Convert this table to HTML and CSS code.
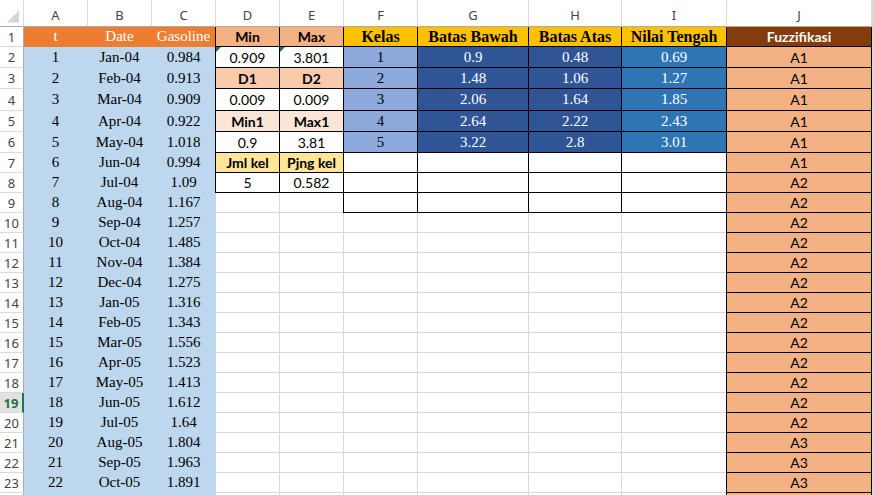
FILE: index.html
```
<!DOCTYPE html>
<html>
<head>
<meta charset="utf-8">
<link rel="stylesheet" href="styles.css">
</head>
<body>
<div class="sheet">
  <div class="ch corner"><svg width="24" height="26" viewBox="0 0 24 26"><polygon points="20,10 20,23 7,23" fill="#d6d6d6"/></svg></div>
  <div class="ch">A</div><div class="ch">B</div><div class="ch">C</div><div class="ch">D</div><div class="ch">E</div><div class="ch">F</div><div class="ch">G</div><div class="ch">H</div><div class="ch">I</div><div class="ch">J</div><div class="ch"></div>

  <div class="rh">1</div>
  <div class="c or">t</div><div class="c or">Date</div><div class="c or">Gasoline</div>
  <div class="c k s1 bx bl">Min</div><div class="c k s1 bx">Max</div>
  <div class="c h gold bx bl">Kelas</div><div class="c h gold bx">Batas Bawah</div><div class="c h gold bx">Batas Atas</div><div class="c h gold bx">Nilai Tengah</div>
  <div class="c k w brn bx bl">Fuzzifikasi</div><div class="c"></div>

  <div class="rh">2</div>
  <div class="c lb">1</div><div class="c lb">Jan-04</div><div class="c lb">0.984</div>
  <div class="c n bx bl tri">0.909</div><div class="c n bx tri">3.801</div>
  <div class="c fb bx bl">1</div><div class="c w db bx">0.9</div><div class="c w db bx">0.48</div><div class="c w mb bx">0.69</div>
  <div class="c n sa bx bl">A1</div><div class="c"></div>

  <div class="rh">3</div>
  <div class="c lb">2</div><div class="c lb">Feb-04</div><div class="c lb">0.913</div>
  <div class="c k s2 bx bl">D1</div><div class="c k s2 bx">D2</div>
  <div class="c fb bx bl">2</div><div class="c w db bx">1.48</div><div class="c w db bx">1.06</div><div class="c w mb bx">1.27</div>
  <div class="c n sa bx bl">A1</div><div class="c"></div>

  <div class="rh">4</div>
  <div class="c lb">3</div><div class="c lb">Mar-04</div><div class="c lb">0.909</div>
  <div class="c n bx bl">0.009</div><div class="c n bx">0.009</div>
  <div class="c fb bx bl">3</div><div class="c w db bx">2.06</div><div class="c w db bx">1.64</div><div class="c w mb bx">1.85</div>
  <div class="c n sa bx bl">A1</div><div class="c"></div>

  <div class="rh">5</div>
  <div class="c lb">4</div><div class="c lb">Apr-04</div><div class="c lb">0.922</div>
  <div class="c k s3 bx bl">Min1</div><div class="c k s3 bx">Max1</div>
  <div class="c fb bx bl">4</div><div class="c w db bx">2.64</div><div class="c w db bx">2.22</div><div class="c w mb bx">2.43</div>
  <div class="c n sa bx bl">A1</div><div class="c"></div>

  <div class="rh">6</div>
  <div class="c lb">5</div><div class="c lb">May-04</div><div class="c lb">1.018</div>
  <div class="c n bx bl">0.9</div><div class="c n bx">3.81</div>
  <div class="c fb bx bl">5</div><div class="c w db bx">3.22</div><div class="c w db bx">2.8</div><div class="c w mb bx">3.01</div>
  <div class="c n sa bx bl">A1</div><div class="c"></div>

  <div class="rh">7</div>
  <div class="c lb">6</div><div class="c lb">Jun-04</div><div class="c lb">0.994</div>
  <div class="c k gd bx bl">Jml kel</div><div class="c k gd bx">Pjng kel</div>
  <div class="c bx bl"></div><div class="c bx"></div><div class="c bx"></div><div class="c bx"></div>
  <div class="c n sa bx bl">A1</div><div class="c"></div>

  <div class="rh">8</div>
  <div class="c lb">7</div><div class="c lb">Jul-04</div><div class="c lb">1.09</div>
  <div class="c n bx bl">5</div><div class="c n bx">0.582</div>
  <div class="c bx bl"></div><div class="c bx"></div><div class="c bx"></div><div class="c bx"></div>
  <div class="c n sa bx bl">A2</div><div class="c"></div>

  <div class="rh">9</div>
  <div class="c lb">8</div><div class="c lb">Aug-04</div><div class="c lb">1.167</div>
  <div class="c"></div><div class="c"></div>
  <div class="c bx bl"></div><div class="c bx"></div><div class="c bx"></div><div class="c bx"></div>
  <div class="c n sa bx bl">A2</div><div class="c"></div>

  <div class="rh">10</div>
  <div class="c lb">9</div><div class="c lb">Sep-04</div><div class="c lb">1.257</div>
  <div class="c"></div><div class="c"></div><div class="c"></div><div class="c"></div><div class="c"></div><div class="c"></div>
  <div class="c n sa bx bl">A2</div><div class="c"></div>

  <div class="rh">11</div>
  <div class="c lb">10</div><div class="c lb">Oct-04</div><div class="c lb">1.485</div>
  <div class="c"></div><div class="c"></div><div class="c"></div><div class="c"></div><div class="c"></div><div class="c"></div>
  <div class="c n sa bx bl">A2</div><div class="c"></div>

  <div class="rh">12</div>
  <div class="c lb">11</div><div class="c lb">Nov-04</div><div class="c lb">1.384</div>
  <div class="c"></div><div class="c"></div><div class="c"></div><div class="c"></div><div class="c"></div><div class="c"></div>
  <div class="c n sa bx bl">A2</div><div class="c"></div>

  <div class="rh">13</div>
  <div class="c lb">12</div><div class="c lb">Dec-04</div><div class="c lb">1.275</div>
  <div class="c"></div><div class="c"></div><div class="c"></div><div class="c"></div><div class="c"></div><div class="c"></div>
  <div class="c n sa bx bl">A2</div><div class="c"></div>

  <div class="rh">14</div>
  <div class="c lb">13</div><div class="c lb">Jan-05</div><div class="c lb">1.316</div>
  <div class="c"></div><div class="c"></div><div class="c"></div><div class="c"></div><div class="c"></div><div class="c"></div>
  <div class="c n sa bx bl">A2</div><div class="c"></div>

  <div class="rh">15</div>
  <div class="c lb">14</div><div class="c lb">Feb-05</div><div class="c lb">1.343</div>
  <div class="c"></div><div class="c"></div><div class="c"></div><div class="c"></div><div class="c"></div><div class="c"></div>
  <div class="c n sa bx bl">A2</div><div class="c"></div>

  <div class="rh">16</div>
  <div class="c lb">15</div><div class="c lb">Mar-05</div><div class="c lb">1.556</div>
  <div class="c"></div><div class="c"></div><div class="c"></div><div class="c"></div><div class="c"></div><div class="c"></div>
  <div class="c n sa bx bl">A2</div><div class="c"></div>

  <div class="rh">17</div>
  <div class="c lb">16</div><div class="c lb">Apr-05</div><div class="c lb">1.523</div>
  <div class="c"></div><div class="c"></div><div class="c"></div><div class="c"></div><div class="c"></div><div class="c"></div>
  <div class="c n sa bx bl">A2</div><div class="c"></div>

  <div class="rh">18</div>
  <div class="c lb">17</div><div class="c lb">May-05</div><div class="c lb">1.413</div>
  <div class="c"></div><div class="c"></div><div class="c"></div><div class="c"></div><div class="c"></div><div class="c"></div>
  <div class="c n sa bx bl">A2</div><div class="c"></div>

  <div class="rh act">19</div>
  <div class="c lb">18</div><div class="c lb">Jun-05</div><div class="c lb">1.612</div>
  <div class="c"></div><div class="c"></div><div class="c"></div><div class="c"></div><div class="c"></div><div class="c"></div>
  <div class="c n sa bx bl">A2</div><div class="c"></div>

  <div class="rh">20</div>
  <div class="c lb">19</div><div class="c lb">Jul-05</div><div class="c lb">1.64</div>
  <div class="c"></div><div class="c"></div><div class="c"></div><div class="c"></div><div class="c"></div><div class="c"></div>
  <div class="c n sa bx bl">A2</div><div class="c"></div>

  <div class="rh">21</div>
  <div class="c lb">20</div><div class="c lb">Aug-05</div><div class="c lb">1.804</div>
  <div class="c"></div><div class="c"></div><div class="c"></div><div class="c"></div><div class="c"></div><div class="c"></div>
  <div class="c n sa bx bl">A3</div><div class="c"></div>

  <div class="rh">22</div>
  <div class="c lb">21</div><div class="c lb">Sep-05</div><div class="c lb">1.963</div>
  <div class="c"></div><div class="c"></div><div class="c"></div><div class="c"></div><div class="c"></div><div class="c"></div>
  <div class="c n sa bx bl">A3</div><div class="c"></div>

  <div class="rh">23</div>
  <div class="c lb">22</div><div class="c lb">Oct-05</div><div class="c lb">1.891</div>
  <div class="c"></div><div class="c"></div><div class="c"></div><div class="c"></div><div class="c"></div><div class="c"></div>
  <div class="c n sa bx bl">A3</div><div class="c"></div>

  <div class="rh"></div>
  <div class="c lb"></div><div class="c lb"></div><div class="c lb"></div>
  <div class="c"></div><div class="c"></div><div class="c"></div><div class="c"></div><div class="c"></div><div class="c"></div>
  <div class="c n sa bx bl"></div><div class="c"></div>
</div>
</body>
</html>
```
FILE: styles.css
```
* { box-sizing: border-box; margin: 0; padding: 0; }
html, body { width: 873px; height: 495px; overflow: hidden; background: #fff; }

.sheet {
  display: grid;
  grid-template-columns: 24px 64px 64px 64px 64px 64px 74px 111px 93px 105px 145px 1fr;
  grid-template-rows: 27px 20px 21px 21px 22px 21px 21px repeat(18, 20px);
}

.ch {
  display: flex;
  align-items: center;
  justify-content: center;
  padding-top: 3px;
  font: 13px "Noto Sans", "DejaVu Sans", sans-serif;
  color: #444;
  background: #fff;
  border-right: 1px solid #dadada;
  border-bottom: 1px solid #ababab;
}
.corner { padding: 0; align-items: flex-start; justify-content: flex-start; }
.corner svg { display: block; }

.rh {
  display: flex;
  align-items: center;
  justify-content: center;
  font: 13px "Noto Sans", "DejaVu Sans", sans-serif;
  color: #444;
  background: #fff;
  border-right: 1px solid #ababab;
  border-bottom: 1px solid #dadada;
}
.rh.act {
  background: #e1e1e1;
  color: #217346;
  font-weight: bold;
  border-right: 2px solid #217346;
}

.c {
  position: relative;
  display: flex;
  align-items: center;
  justify-content: center;
  white-space: nowrap;
  overflow: visible;
  font: 15px "Liberation Serif", "Times New Roman", serif;
  color: #000;
  border-right: 1px solid #d9d9d9;
  border-bottom: 1px solid #d9d9d9;
}

/* text styles */
.k { font: bold 14px Lato, "Liberation Sans", sans-serif; }
.n { font: 14px Lato, "Liberation Sans", sans-serif; }
.h { font: bold 16px "Liberation Serif", "Times New Roman", serif; }
.w { color: #fff; }

/* fills (filled cells hide gridlines) */
.or { background: #ed7d31; border-color: #ed7d31; color: #fff; }
.lb { background: #bdd7ee; border-color: #bdd7ee; }
.s1 { background: #f4b183; }
.s2 { background: #f8cbad; }
.s3 { background: #fbe5d6; }
.gd { background: #ffe699; }
.gold { background: #ffc000; }
.fb { background: #8ea9db; }
.db { background: #2f5597; }
.mb { background: #2e75b6; }
.brn { background: #843c0c; }
.sa { background: #f4b183; }

/* black cell borders */
.bx { border-right-color: #000; border-bottom-color: #000; }
.bl { box-shadow: -1px 0 0 #000; }

/* error indicator */
.tri::before {
  content: "";
  position: absolute;
  left: 0;
  top: 0;
  border-top: 5px solid #1e7145;
  border-right: 5px solid transparent;
}
```
